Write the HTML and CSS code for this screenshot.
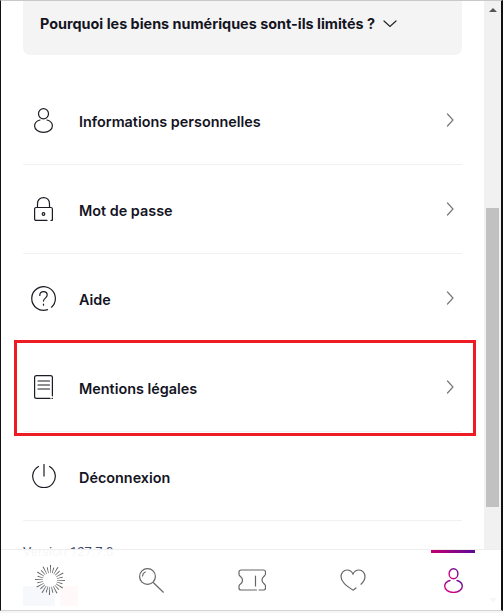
FILE: index.html
```html
<!DOCTYPE html>
<html lang="fr">
<head>
    <meta charset="UTF-8">
    <meta name="viewport" content="width=device-width, initial-scale=1.0">
    <title>Mon compte</title>
    <link rel="stylesheet" href="styles.css">
</head>
<body>
<div class="window">
    <div class="page">
        <main class="content">
            <div class="faq">
                <span>Pourquoi les biens numériques sont-ils limités ?</span>
                <svg class="faq-arrow" width="14" height="8" viewBox="0 0 14 8"><path d="M1 1l6 5.5L13 1"/></svg>
            </div>

            <ul class="menu">
                <li class="menu-item">
                    <span class="menu-icon">
                        <svg width="19" height="25" viewBox="0 0 19 25"><ellipse cx="9.5" cy="5.7" rx="5" ry="5.100"/><path d="M6 12C2.500 13 .6 15.500 .6 18c0 3.500 4 6.400 8.900 6.400s8.900-2.900 8.900-6.400c0-2.500-1.900-5-5.400-6"/></svg>
                    </span>
                    <span class="menu-label">Informations personnelles</span>
                    <svg class="menu-chevron" width="9" height="14" viewBox="0 0 9 14"><path d="M1.500 1l5.500 6-5.500 6"/></svg>
                </li>
                <li class="menu-item">
                    <span class="menu-icon">
                        <svg width="19" height="24" viewBox="0 0 19 24"><path d="M3.500 10.500V6.800C3.500 3 6 .6 9.500 .6s6 2.400 6 6.200v3.700"/><path d="M17 23.400h1a.6.6 0 0 0 .4-.6V12a1.500 1.500 0 0 0-1.500-1.500H2.100A1.500 1.500 0 0 0 .6 12v9.900a1.500 1.500 0 0 0 1.500 1.500H13"/><circle cx="9.500" cy="17" r="1.300"/></svg>
                    </span>
                    <span class="menu-label">Mot de passe</span>
                    <svg class="menu-chevron" width="9" height="14" viewBox="0 0 9 14"><path d="M1.500 1l5.500 6-5.500 6"/></svg>
                </li>
                <li class="menu-item">
                    <span class="menu-icon">
                        <svg width="25" height="25" viewBox="0 0 25 25"><path d="M16.500 23.600A11.800 11.800 0 1 1 20.500 21.200"/><path d="M8.800 9.500c0-2.400 1.600-3.900 3.700-3.900s3.700 1.500 3.700 3.500c0 3-3.700 3-3.700 6"/><path d="M12.500 18v1.200"/></svg>
                    </span>
                    <span class="menu-label">Aide</span>
                    <svg class="menu-chevron" width="9" height="14" viewBox="0 0 9 14"><path d="M1.500 1l5.500 6-5.500 6"/></svg>
                </li>
                <li class="menu-item">
                    <span class="menu-icon">
                        <svg width="19" height="24" viewBox="0 0 19 24"><path d="M16 23.400H2.500A1.900 1.900 0 0 1 .6 21.500V2.500A1.900 1.900 0 0 1 2.500 .6h14A1.900 1.900 0 0 1 18.400 2.500v18.300"/><path d="M18.400 23.400h-.3"/><path d="M4 6h11.500M4 10h11.500M4 14h11.500"/></svg>
                    </span>
                    <span class="menu-label">Mentions légales</span>
                    <svg class="menu-chevron" width="9" height="14" viewBox="0 0 9 14"><path d="M1.500 1l5.500 6-5.500 6"/></svg>
                </li>
                <li class="menu-item">
                    <span class="menu-icon">
                        <svg width="24" height="24" viewBox="0 0 24 24"><path d="M6.500 2.500a11.300 11.300 0 1 0 11 0"/><path d="M12 .6v11.500"/></svg>
                    </span>
                    <span class="menu-label">Déconnexion</span>
                </li>
            </ul>

            <div class="version">Version 127.7.0</div>
            <div class="flags"><span class="flag-fr"></span><span class="flag-en"></span></div>
        </main>

        <div class="scrollbar">
            <span class="scroll-up"></span>
            <div class="scroll-track"><div class="scroll-thumb"></div></div>
            <span class="scroll-down"></span>
        </div>
    </div>

    <nav class="tabbar">
        <a class="tab">
            <svg width="30" height="30" viewBox="0 0 30 30" class="tab-icon tab-sun">
                <circle cx="15" cy="15" r="11" stroke-width="8" pathLength="240" stroke-dasharray="3 17"/>
                <circle cx="15" cy="15" r="10" stroke-width="6" pathLength="240" stroke-dasharray="3 17" stroke-dashoffset="10"/>
            </svg>
        </a>
        <a class="tab">
            <svg width="25" height="25" viewBox="0 0 25 25" class="tab-icon"><circle cx="8.500" cy="8.500" r="7.900"/><path d="M3.500 8c.2-2 1.200-3.300 2.800-4"/><path d="M14.500 14.800l9.800 9.400"/></svg>
        </a>
        <a class="tab">
            <svg width="28" height="22" viewBox="0 0 28 22" class="tab-icon"><path d="M21 21h4.500a2 2 0 0 0 2-2v-2c0-1-.7-1.500-1.500-2.300-1.300-1-2-2.200-2-3.700s.7-2.700 2-3.700c.8-.8 1.500-1.300 1.500-2.300V3a2 2 0 0 0-2-2H3a2 2 0 0 0-2 2v2.300c0 1 .7 1.500 1.500 2.300 1.300 1 2 2.200 2 3.700s-.7 2.700-2 3.700C1.700 15.500 1 16 1 17v2a2 2 0 0 0 2 2h15.500"/><path d="M17.500 7v10"/></svg>
        </a>
        <a class="tab">
            <svg width="26" height="22" viewBox="0 0 26 22" class="tab-icon"><path d="M16 19l-2.300 1.800c-.4.300-.9.300-1.300 0C7 17 1 13 1 7.500 1 3.800 3.800 1 7 1c2.500 0 4.800 1.400 6 4 1.200-2.600 3.500-4 6-4 3.200 0 6 2.800 6 6.500 0 3-1.800 5.600-4 7.700"/></svg>
        </a>
        <a class="tab tab-active">
            <svg width="19" height="25" viewBox="0 0 19 25" class="tab-icon">
                <defs><linearGradient id="profil" x1="0" y1="1" x2="1" y2="0"><stop offset="0" stop-color="#e6007e"/><stop offset="1" stop-color="#5a0a96"/></linearGradient></defs>
                <ellipse cx="9.500" cy="5.700" rx="4.400" ry="5" stroke="url(#profil)"/>
                <path d="M6 12.500C2.500 13.500 .7 15.500 .7 18.200c0 3.500 4 6.200 8.800 6.200s8.800-2.700 8.800-6.200c0-2.700-1.800-4.700-5.300-5.700" stroke="url(#profil)"/>
            </svg>
        </a>
    </nav>

    <!-- encadre rouge -->
    <div class="highlight"></div>
</div>
</body>
</html>
```

FILE: styles.css
```css
/* Reset some default styles */
html, body {
    margin: 0;
    padding: 0;
    height: 100%;
    overflow: hidden;
    font-family: Inter, "Liberation Sans", sans-serif;
    background: #f5f5f5;
}

.window {
    position: relative;
    height: 611px;
    box-sizing: border-box;
    background: #fff;
    border-left: 1px solid #111;
    border-right: 2px solid #111;
    border-top: 1px solid #c9c9c9;
    border-bottom: 1px solid #d4d4d4;
    overflow: hidden;
}

.page {
    display: flex;
    height: 100%;
}

.content {
    flex: 1;
    padding: 0 22px;
}

.faq {
    display: flex;
    align-items: center;
    gap: 8px;
    height: 54px;
    padding: 0 17px 9px;
    box-sizing: border-box;
    background: #f4f4f4;
    border-radius: 0 0 7px 7px;
    font-size: 14.4px;
    font-weight: 700;
    color: #14141f;
}

.faq-arrow path,
.menu-icon svg,
.menu-chevron path,
.tab-icon {
    fill: none;
    stroke-linecap: round;
}

.faq-arrow path {
    stroke: #222;
    stroke-width: 1.2;
}

.menu {
    list-style: none;
    margin: 21px 0 0;
    padding: 0;
}

.menu-item {
    display: flex;
    align-items: center;
    height: 89px;
    box-sizing: border-box;
    border-bottom: 1px solid #f1f1f1;
}

.menu-icon {
    display: flex;
    justify-content: center;
    width: 41px;
}

.menu-icon svg {
    stroke: #1c1c24;
    stroke-width: 1.2;
}

.menu-label {
    flex: 1;
    margin: 2px 0 0 15px;
    font-size: 14.4px;
    font-weight: 600;
    color: #14141f;
}

.menu-chevron {
    margin-right: 7px;
}

.menu-chevron path {
    stroke: #777;
    stroke-width: 1.2;
}

.version {
    margin-top: 23px;
    font-size: 13px;
    line-height: 15px;
    color: #3c4a6a;
    font-family: Roboto, sans-serif;
}

.flags {
    display: flex;
    margin-top: 27px;
}

.flag-fr,
.flag-en {
    height: 20px;
}

.flag-fr {
    width: 32px;
    background: #6673c4;
}

.flag-en {
    width: 18px;
    margin-left: 5px;
    background: #f28080;
}

/* fausse barre de defilement */
.scrollbar {
    width: 17px;
    background: #f1f1f1;
    display: flex;
    flex-direction: column;
    align-items: center;
}

.scroll-track {
    flex: 1;
    width: 100%;
    padding: 196px 2px 0;
    box-sizing: border-box;
}

.scroll-thumb {
    height: 299px;
    background: #c1c1c1;
}

.scroll-up,
.scroll-down {
    display: block;
    width: 0;
    height: 0;
    border-left: 4px solid transparent;
    border-right: 4px solid transparent;
}

.scroll-up {
    margin-top: 7px;
    border-bottom: 4px solid #555;
}

.scroll-down {
    margin-bottom: 8px;
    border-top: 4px solid #555;
}

.tabbar {
    position: absolute;
    left: -1px;
    right: 0;
    bottom: 0;
    height: 60px;
    display: flex;
    background: rgba(255, 255, 255, 0.95);
    border-top: 1px solid #eee;
}

.tab {
    flex: 0 0 100.8px;
    display: flex;
    align-items: center;
    justify-content: center;
    position: relative;
}

.tab-icon {
    stroke: #666;
    stroke-width: 1.2;
}

.tab-sun {
    stroke-linecap: butt;
    stroke: #666;
}

.tab-active .tab-icon {
    stroke-width: 1.4;
}

.tab-active::before {
    content: "";
    position: absolute;
    top: 0;
    left: 28px;
    width: 44px;
    height: 3px;
    background: linear-gradient(to right, #c4006e, #5a0a96);
}

.highlight {
    position: absolute;
    left: 13px;
    top: 339px;
    width: 462px;
    height: 96px;
    box-sizing: border-box;
    border: 3px solid #ed1c24;
}
```
